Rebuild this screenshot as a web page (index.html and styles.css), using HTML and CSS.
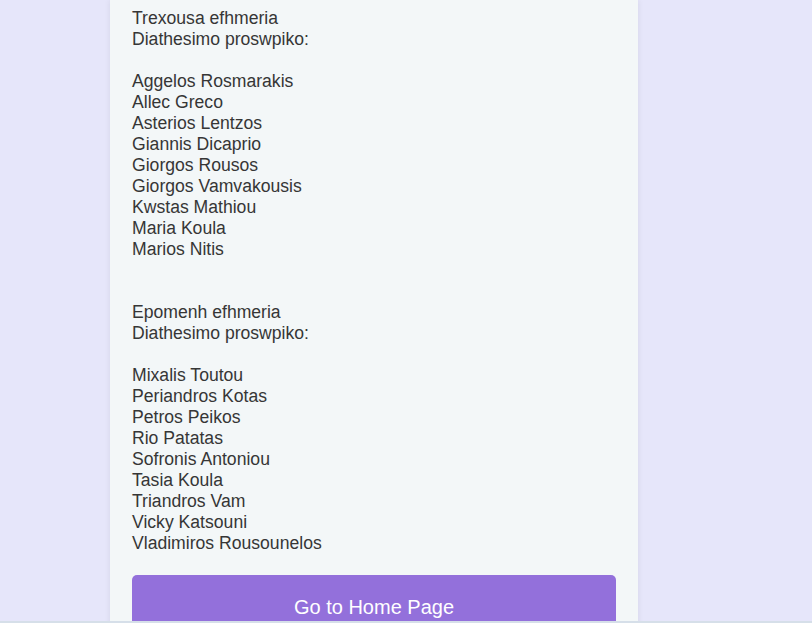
FILE: index.html
```html
<!DOCTYPE html>
<html>
<head>
<meta charset="utf-8">
<link rel="stylesheet" href="styles.css">
</head>
<body>
<div class="card">
  <div class="section">
    <div>Trexousa efhmeria</div>
    <div>Diathesimo proswpiko:</div>
    <div class="blank"></div>
    <div>Aggelos Rosmarakis</div>
    <div>Allec Greco</div>
    <div>Asterios Lentzos</div>
    <div>Giannis Dicaprio</div>
    <div>Giorgos Rousos</div>
    <div>Giorgos Vamvakousis</div>
    <div>Kwstas Mathiou</div>
    <div>Maria Koula</div>
    <div>Marios Nitis</div>
    <div class="blank"></div>
    <div class="blank"></div>
    <div>Epomenh efhmeria</div>
    <div>Diathesimo proswpiko:</div>
    <div class="blank"></div>
    <div>Mixalis Toutou</div>
    <div>Periandros Kotas</div>
    <div>Petros Peikos</div>
    <div>Rio Patatas</div>
    <div>Sofronis Antoniou</div>
    <div>Tasia Koula</div>
    <div>Triandros Vam</div>
    <div>Vicky Katsouni</div>
    <div>Vladimiros Rousounelos</div>
  </div>
  <button class="home-btn">Go to Home Page</button>
</div>
<div class="bottom-band"></div>
</body>
</html>
```
FILE: styles.css
```css
html, body {
  margin: 0;
  padding: 0;
  background: #e6e6fa;
  font-family: "Liberation Sans", Arial, sans-serif;
  overflow: hidden;
}
.card {
  width: 484px;
  margin-left: 110px;
  padding: 8px 22px 30px;
  background: #f3f7f8;
  box-shadow: 0 0 6px rgba(0, 0, 0, 0.08);
  border-radius: 0 0 8px 8px;
}
.section {
  font-size: 17.6px;
  line-height: 21px;
  color: #363636;
}
.blank {
  height: 21px;
}
.home-btn {
  display: block;
  width: 100%;
  margin-top: 21px;
  height: 64px;
  padding: 0;
  border: none;
  border-radius: 5px;
  background: #9370db;
  color: #fff;
  font-family: "Liberation Sans", Arial, sans-serif;
  font-size: 20px;
}
.bottom-band {
  position: fixed;
  left: 0;
  right: 0;
  bottom: 0;
  height: 2px;
  background: #d6dfe9;
}
```
